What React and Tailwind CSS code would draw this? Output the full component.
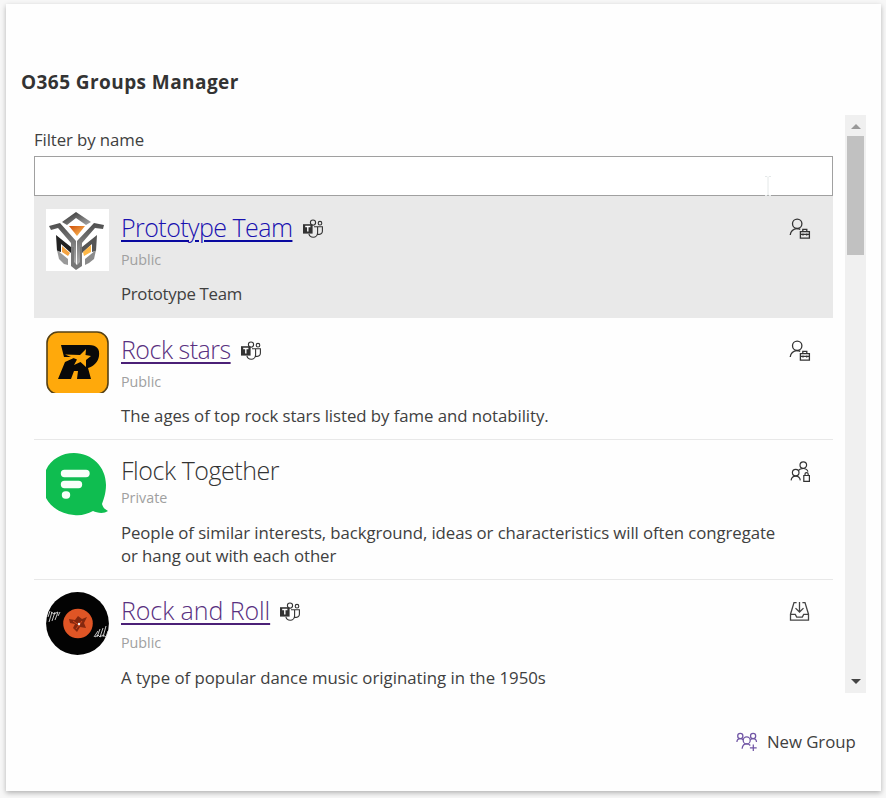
import React from "react";

function TeamsIcon() {
  return (
    <svg className="mt-1 h-[22px] w-[22px] shrink-0" viewBox="0 0 22 22" fill="none" stroke="#333" strokeWidth="1.1">
      <circle cx="11" cy="4.6" r="2.6" />
      <circle cx="18" cy="5.2" r="1.8" />
      <path d="M12 8.7H15.6V14.4C15.6 17.2 13.7 19.2 11.2 19.2C9 19.2 7.4 17.9 6.9 15.8M15.6 8.7H20.4V13.2C20.4 15.4 18.4 16.9 15.6 16.2" />
      <path d="M1 6.2H10.6V15.6H1Z" fill="#333" stroke="none" />
      <path d="M3.2 8.5H8.4M5.8 8.5V13.5" stroke="#fff" strokeWidth="1.4" />
    </svg>
  );
}

function OwnerIcon() {
  return (
    <svg className="h-[22px] w-[22px]" viewBox="0 0 22 22" fill="none" stroke="#333" strokeWidth="1.3">
      <circle cx="8.2" cy="5.8" r="4.7" />
      <path d="M1.2 17C1.5 13.5 4.3 10.6 8 10.6C9.3 10.6 10.4 10.9 11.3 11.4" />
      <path d="M11.4 13.6H20.4V20.1H11.4ZM13.8 13.4V11.4H17.8V13.4M11.4 16.3H20.4M14 15.4V17.6M17.7 15.4V17.6" />
    </svg>
  );
}

function PrivateIcon() {
  return (
    <svg className="h-[22px] w-[22px]" viewBox="0 0 22 22" fill="none" stroke="#333" strokeWidth="1.2">
      <circle cx="14.3" cy="4.1" r="3.3" />
      <circle cx="6.7" cy="11.6" r="3.3" />
      <path d="M2.1 19.4C2.4 16.9 4.3 15.1 6.7 15.1C9.1 15.1 11 16.9 11.3 19.4M9.6 9.3C10.4 8.1 12.3 7.5 14.3 7.5C16.5 7.5 18.3 8.6 18.9 10.6" />
      <path d="M14.8 14.5H20.4V20.4H14.8ZM16 14.3V13.1C16 11.1 19.2 11.1 19.2 13.1V14.3" />
    </svg>
  );
}

function JoinIcon() {
  return (
    <svg className="h-[22px] w-[22px]" viewBox="0 0 22 22" fill="none" stroke="#444" strokeWidth="1.3">
      <path d="M7.6 2.6H5L1.5 14.2V20.2H19.5V14.2L16 2.6H13.4M1.5 14.4H6.3L7.7 17.1H13.3L14.7 14.4H19.5" />
      <path d="M10.5 2V11.8M6.5 8.1L10.5 12L14.5 8.1" />
    </svg>
  );
}

function NewGroupIcon() {
  return (
    <svg className="h-[22px] w-[22px]" viewBox="0 0 22 22" fill="none" stroke="#7156a5" strokeWidth="1.25">
      <circle cx="4.3" cy="4.9" r="2.6" />
      <circle cx="17.1" cy="4.9" r="2.6" />
      <circle cx="10.7" cy="9.4" r="3.5" />
      <path d="M.9 11C1 8.9 2.4 7.6 4.3 7.6C5.5 7.6 6.5 8 7.1 8.8M20.5 11C20.4 8.9 19 7.6 17.1 7.6C15.9 7.6 14.9 8 14.3 8.8" />
      <path d="M6.1 17.7C6.4 14.8 8.3 12.9 10.7 12.9C12.2 12.9 13.5 13.5 14.3 14.5M17.3 13.4V20.1M13.9 16.8H20.7" />
    </svg>
  );
}

function PrototypeLogo() {
  return (
    <svg className="h-[62px] w-[63px] bg-white" viewBox="0 0 63 62">
      <defs>
        <linearGradient id="steel" x1="0" y1="0" x2="1" y2="1">
          <stop offset="0" stopColor="#292929" />
          <stop offset="1" stopColor="#aaa" />
        </linearGradient>
        <linearGradient id="silver" x1="0" y1="0" x2="0" y2="1">
          <stop offset="0" stopColor="#4d4d4d" />
          <stop offset="1" stopColor="#b0b0b0" />
        </linearGradient>
        <linearGradient id="amber" x1="0" y1="0" x2="1" y2="1">
          <stop offset="0" stopColor="#cf4d08" />
          <stop offset="1" stopColor="#ffc760" />
        </linearGradient>
      </defs>
      <path d="M16 13L30 3L45 13L40 16L30 9L21 16Z" fill="url(#steel)" />
      <path d="M3 17L14 14L30 32V56L25 55V34L12 19L5 21Z" fill="url(#silver)" />
      <path d="M58 16L48 14L31 32V56L36 55V34L49 19L57 20Z" fill="url(#silver)" />
      <path d="M10 26L25 38V44L15 35V43L11 42Z" fill="#222" />
      <path d="M51 26L36 38V44L46 35V43L50 42Z" fill="#555" />
      <path d="M11 41L22 50V56L18 55L13 50Z" fill="#999" />
      <path d="M50 41L39 50V56L43 54L48 50Z" fill="#8b8b8b" />
      <path d="M25 38H28V53L31 56L34 53V38H36V57L30 61L25 57Z" fill="#777" />
      <path d="M23 17H39L31 27Z" fill="url(#amber)" />
      <path d="M16 37L24 44L22 47L16 43Z" fill="#f4a341" />
      <path d="M45 36L37 43L38 47L45 43Z" fill="#ffb847" />
    </svg>
  );
}

function RockLogo() {
  return (
    <svg className="h-[62px] w-[63px]" viewBox="0 0 63 62">
      <rect x="1" y="1" width="61" height="62" rx="11" fill="#ffa90b" stroke="#554115" strokeWidth="1.6" />
      <path d="M15 14H43C51 14 54 18 53 25C52 31 48 35 42 37L45 48H31L32 40H28L25 48H12L19 31L30 26H18Z" fill="#090909" />
      <path d="M19 23.5L34 24L40 18L39.500 24L45 25L40 29L40 36L34.500 31L28 34L31 28.500Z" fill="#ffa90b" />
    </svg>
  );
}

function FlockLogo() {
  return (
    <svg className="h-[63px] w-[63px]" viewBox="0 0 63 63">
      <path d="M0 17C5 6 16 0 28 0C46 0 60 14 60 32C60 41 57 48 56 51C57 55 59 56 62 58C58 61 51 60 47 58C41 61 35 63 28 62C16 61 5 55 0 45Z" fill="#0fbd50" />
      <path d="M18.500 20.5H40M18.500 31.5H32.500M19.500 42H20.5" stroke="#f8fff9" strokeWidth="7.4" strokeLinecap="round" />
    </svg>
  );
}

function VinylLogo() {
  return (
    <svg className="h-[63px] w-[63px]" viewBox="0 0 63 63">
      <circle cx="31.5" cy="31.5" r="31.4" fill="#030303" />
      <circle cx="32" cy="31.5" r="14.8" fill="#df5525" />
      <path d="M23 27L29 28L32 24L36 27L41 25L38 31L40 36L34 35L31 40L27 36L29 32L24 31Z" fill="#84280f" />
      <path d="M27 29L34 34M36 29L30 37" stroke="#d3481c" strokeWidth="1" />
      <circle cx="33" cy="32" r="1.2" fill="#eee" />
      <path d="M4 19L2 25M6 20L3 30M9 20L6 29M12 20L9 28M14 20L12 24M48 45L52 39M51 45L54 37M54 45L57 36M57 45L60 34M60 45L62 39M5 20L8 22L12 20M49 45L52 43L54 45L57 43L60 45" fill="none" stroke="#ddd" strokeWidth=".9" />
    </svg>
  );
}

const groups = [
  {
    name: "Prototype Team", visibility: "Public", description: "Prototype Team",
    Logo: PrototypeLogo, Status: OwnerIcon, team: true,
    row: "h-[122px] bg-[#e9e9e9] pt-[13px]",
    title: "w-[172px] text-[#1a11b0] decoration-[#0909a0] tracking-[-0.55px]",
    text: "mt-2.5 tracking-[-0.3px]", status: "pt-[9px]",
  },
  {
    name: "Rock stars", visibility: "Public", description: "The ages of top rock stars listed by fame and notability.",
    Logo: RockLogo, Status: OwnerIcon, team: true,
    row: "h-[122px] border-b border-[#e8e8e8] pt-[13px]",
    title: "w-[110px] text-[#593080] decoration-[#4b2077] tracking-[-0.5px]",
    text: "mt-2.5 tracking-[-0.05px]", status: "pt-[9px]",
  },
  {
    name: "Flock Together", visibility: "Private",
    description: "People of similar interests, background, ideas or characteristics will often congregate or hang out with each other",
    Logo: FlockLogo, Status: PrivateIcon, team: false,
    row: "h-[140px] border-b border-[#e8e8e8] pt-[13px]",
    title: "text-[#333] tracking-[-0.45px]",
    text: "mt-[11px] tracking-[-0.08px]", status: "pt-2",
  },
  {
    name: "Rock and Roll", visibility: "Public", description: "A type of popular dance music originating in the 1950s",
    Logo: VinylLogo, Status: JoinIcon, team: true,
    row: "h-[113px] pt-3",
    title: "w-[149px] text-[#593080] decoration-[#4b2077] tracking-[-0.08px]",
    text: "mt-[11px]", status: "pt-2",
  },
];

function GroupRow({ group }) {
  const { Logo, Status } = group;
  return (
    <li className={`flex shrink-0 pl-3 ${group.row}`}>
      <div className="w-[75px] shrink-0"><Logo /></div>
      <div className="w-[660px] shrink-0">
        <div className={`flex items-center gap-[9px] ${group.team ? "h-9" : "h-[33px]"}`}>
          {group.team ? (
            <a href="#" className={`whitespace-nowrap text-[25px] leading-9 font-light underline decoration-2 underline-offset-[3px] ${group.title}`}>{group.name}</a>
          ) : (
            <h2 className={`text-[25px] leading-8 font-light ${group.title}`}>{group.name}</h2>
          )}
          {group.team && <TeamsIcon />}
        </div>
        <p className={`text-[14.3px] leading-6 text-[#a0a0a0] ${group.team ? "mt-[3px]" : ""}`}>{group.visibility}</p>
        <p className={`max-w-[656px] text-[16.8px] leading-[23px] text-[#404040] ${group.text}`}>{group.description}</p>
      </div>
      <div className={`ml-2 ${group.status}`}><Status /></div>
    </li>
  );
}

export default function App() {
  return (
    <div className="h-[798px] w-[886px] overflow-hidden bg-[#f7f7f7] pt-1 pl-1.5 font-['Open_Sans','Noto_Sans',sans-serif]">
      <main className="flex h-[787px] w-[875px] flex-col bg-[#fefefe] shadow-[0_2px_5px_rgba(0,0,0,0.28)]">
        <h1 className="mt-[63px] ml-[15px] h-[30px] text-[19px] leading-[30px] font-bold tracking-[0.43px] text-[#333]">O365 Groups Manager</h1>
        <div className="mt-[18px] flex h-[578px] pl-7">
          <section className="flex h-[578px] w-[799px] flex-col overflow-hidden">
            <label htmlFor="filter" className="h-[41px] shrink-0 pt-[13px] text-[16.8px] leading-6 tracking-[-0.1px] text-[#404040]">Filter by name</label>
            <input id="filter" className="h-10 w-full shrink-0 border border-[#a0a0a0] bg-white px-3 outline-none" />
            <ul>
              {groups.map((group) => <GroupRow key={group.name} group={group} />)}
            </ul>
          </section>
          <div className="ml-3 flex h-[578px] w-[21px] flex-col items-center bg-[#f0f0f0]">
            <div className="flex h-[21px] items-center pt-0.5">
              <svg className="h-[5px] w-[10px]" viewBox="0 0 10 5"><path d="M0 5L5 0L10 5Z" fill="#999" /></svg>
            </div>
            <div className="h-[119px] w-[17px] bg-[#c1c1c1]" />
            <div className="mt-auto flex h-[23px] items-center">
              <svg className="h-[5px] w-[10px]" viewBox="0 0 10 5"><path d="M0 0H10L5 5Z" fill="#444" /></svg>
            </div>
          </div>
        </div>
        <button className="mt-[37px] mr-[26px] flex h-6 items-center gap-[9px] self-end text-[16.8px] leading-6 text-[#404040]">
          <NewGroupIcon />
          <span className="w-[88px] text-left tracking-[-0.05px] whitespace-nowrap">New Group</span>
        </button>
      </main>
      <svg className="pointer-events-none absolute top-[176px] left-[764px] h-5 w-2" viewBox="0 0 8 20" fill="none" stroke="#e4e8e8">
        <path d="M1 .5H3L4 1.5L5 .5H7M4 1.5V18.5M1 19.5H3L4 18.5L5 19.5H7" />
      </svg>
    </div>
  );
}
